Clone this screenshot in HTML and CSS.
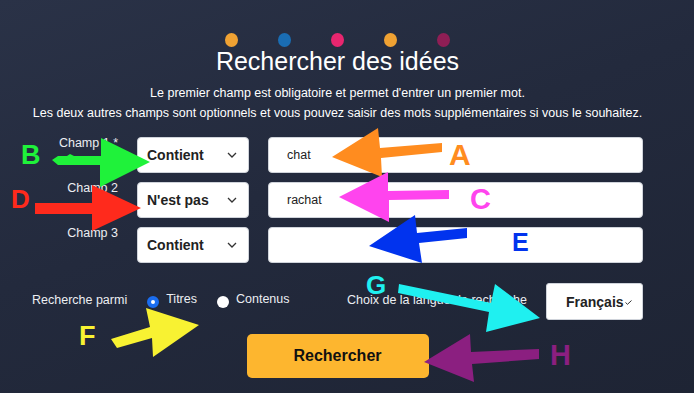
FILE: index.html
```html
<!DOCTYPE html>
<html lang="fr">
<head>
<meta charset="utf-8">
<title>Rechercher des idées</title>
<link rel="stylesheet" href="styles.css">
</head>
<body>
<main class="page">
  <div class="dots">
    <span class="dot dot--orange"></span>
    <span class="dot dot--blue"></span>
    <span class="dot dot--pink"></span>
    <span class="dot dot--orange"></span>
    <span class="dot dot--plum"></span>
  </div>
  <h1 class="title">Rechercher des idées</h1>
  <p class="intro">Le premier champ est obligatoire et permet d'entrer un premier mot.<br>Les deux autres champs sont optionnels et vous pouvez saisir des mots supplémentaires si vous le souhaitez.</p>
  <form class="search">
    <div class="fields">
      <span class="field-label">Champ 1 *</span>
      <div class="select"><span>Contient</span><svg class="chev" width="10" height="6" viewBox="0 0 10 6"><path d="M1 1 L5 5 L9 1" fill="none" stroke="#333" stroke-width="1.3"/></svg></div>
      <div class="input">chat</div>

      <span class="field-label">Champ 2</span>
      <div class="select"><span>N'est pas</span><svg class="chev" width="10" height="6" viewBox="0 0 10 6"><path d="M1 1 L5 5 L9 1" fill="none" stroke="#333" stroke-width="1.3"/></svg></div>
      <div class="input">rachat</div>

      <span class="field-label">Champ 3</span>
      <div class="select"><span>Contient</span><svg class="chev" width="10" height="6" viewBox="0 0 10 6"><path d="M1 1 L5 5 L9 1" fill="none" stroke="#333" stroke-width="1.3"/></svg></div>
      <div class="input"></div>
    </div>
    <div class="options">
      <div class="scope">
        <span class="opt-text">Recherche parmi</span>
        <span class="radio radio--on"></span><span class="radio-label">Titres</span>
        <span class="radio"></span><span class="radio-label">Contenus</span>
      </div>
      <div class="lang">
        <span class="opt-text">Choix de la langue de recherche</span>
        <div class="lang-select"><span>Français</span><svg class="tick" width="7" height="5" viewBox="0 0 7 5"><path d="M0.5 2.5 L2.5 4.3 L6.5 0.5" fill="none" stroke="#333" stroke-width="1"/></svg></div>
      </div>
    </div>
    <button type="button" class="submit">Rechercher</button>
  </form>
</main>
<svg class="annotations" width="694" height="393" viewBox="0 0 694 393">
  <!-- B green -->
  <polygon fill="#1ff23a" points="52,160 58,156 67,156 70,154 74,156 101,156 101,138 150,162 100,187 100,165 58,165"/>
  <text class="mark" x="21" y="164" font-size="27" fill="#1ff23a">B</text>
  <!-- D red -->
  <polygon fill="#ff2a1c" points="35,203 92,203 92,185 141,208 92,231 92,214 35,214"/>
  <text class="mark" x="11" y="208" font-size="26" fill="#ff2a1c">D</text>
  <!-- A orange -->
  <polygon fill="#ff8c1f" points="332,157 378,128 380,148 442,143 442,152 381,158 382,177"/>
  <text class="mark" x="449" y="165" font-size="30" fill="#ff8c1f">A</text>
  <!-- C magenta -->
  <polygon fill="#ff44ee" points="339,197 388,172 388,191 449,190 449,199 389,200 389,222"/>
  <text class="mark" x="470" y="209" font-size="29" fill="#ff44ee">C</text>
  <!-- E blue -->
  <polygon fill="#0133ee" points="369,246 415,215 417,233 467,228 467,238 419,243 422,263"/>
  <text class="mark" x="512" y="251" font-size="25" fill="#0133ee">E</text>
  <!-- F yellow -->
  <polygon fill="#f8f232" points="111,339 150,327 146,308 199,325 153,357 152,338 117,348"/>
  <text class="mark" x="79" y="345" font-size="27" fill="#f8f232">F</text>
  <!-- G cyan -->
  <polygon fill="#1ff0f0" points="399,284 491,303 495,284 540,318 486,332 489,312 398,293"/>
  <text class="mark" x="366" y="294" font-size="26" fill="#1ff0f0">G</text>
  <!-- H purple -->
  <polygon fill="#8b1f80" points="424,362 470,334 471,352 539,349 539,359 472,364 474,382"/>
  <text class="mark" x="550" y="365" font-size="29" fill="#8b1f80">H</text>
</svg>
</body>
</html>
```
FILE: styles.css
```css
html, body {
  margin: 0;
  padding: 0;
  width: 694px;
  height: 393px;
  overflow: hidden;
}
body {
  position: relative;
  background: linear-gradient(160deg, #2a3247 0%, #232a3d 45%, #1e2434 100%);
  font-family: "Liberation Sans", Arial, Helvetica, sans-serif;
  color: #fff;
}
.page {
  width: 675px;
  padding-top: 33px;
  box-sizing: border-box;
}
.dots {
  display: flex;
  justify-content: center;
  gap: 40px;
}
.dot {
  width: 13px;
  height: 14px;
  border-radius: 50%;
}
.dot--orange { background: #f0a233; }
.dot--blue { background: #1a6db3; }
.dot--pink { background: #e8266f; }
.dot--plum { background: #8f1e55; }

.title {
  margin: 0;
  text-align: center;
  font-weight: normal;
  font-size: 25px;
  line-height: 29px;
  color: #fff;
}
.intro {
  margin: 7px 0 0;
  text-align: center;
  font-size: 12.5px;
  line-height: 20px;
  color: #fff;
}
.search {
  margin: 0;
}
.fields {
  display: grid;
  grid-template-columns: 86px 112px 375px;
  grid-auto-rows: 36px;
  column-gap: 19px;
  row-gap: 9px;
  margin: 14px 0 0 32px;
}
.field-label {
  text-align: right;
  font-size: 12.5px;
  line-height: 16px;
  margin-top: -2px;
  color: #eceef2;
}
.select {
  display: flex;
  align-items: center;
  justify-content: space-between;
  background: #fff;
  border: 1px solid #cfd3da;
  border-radius: 4px;
  padding: 0 11px 0 9px;
  font-weight: bold;
  font-size: 14px;
  color: #222;
}
.chev {
  display: block;
}
.input {
  display: flex;
  align-items: center;
  background: #fff;
  border: 1px solid #cfd3da;
  border-radius: 4px;
  padding-left: 18px;
  font-size: 12.5px;
  color: #222;
}
.options {
  display: flex;
  align-items: center;
  justify-content: space-between;
  width: 611px;
  height: 37px;
  margin: 20px 0 0 32px;
}
.scope, .lang {
  display: flex;
  align-items: center;
}
.opt-text {
  font-size: 12.5px;
  color: #eceef2;
  margin-top: -3px;
}
.radio {
  width: 12px;
  height: 12px;
  border-radius: 50%;
  background: #fff;
  margin-left: 20px;
  box-sizing: border-box;
}
.radio--on {
  background: #fff;
  border: 4px solid #1a6df0;
  background: #fff;
}
.radio-label {
  font-size: 12.5px;
  color: #eceef2;
  margin-left: 7px;
  margin-top: -5px;
}
.lang-select {
  display: flex;
  align-items: center;
  width: 97px;
  height: 37px;
  box-sizing: border-box;
  margin-left: 19px;
  padding-left: 19px;
  background: #fff;
  border: 1px solid #cfd3da;
  border-radius: 3px;
  font-weight: bold;
  font-size: 14px;
  color: #222;
}
.tick {
  display: block;
  margin-left: 1px;
  margin-top: 2px;
}
.submit {
  display: block;
  width: 182px;
  height: 44px;
  margin: 14px auto 0;
  background: #fdb62f;
  border: none;
  border-radius: 5px;
  font-family: "Liberation Sans", Arial, sans-serif;
  font-weight: bold;
  font-size: 16px;
  color: #111;
}
.annotations {
  position: absolute;
  left: 0;
  top: 0;
  pointer-events: none;
}
.mark {
  font-family: "Liberation Sans", Arial, sans-serif;
  font-weight: bold;
}
```
